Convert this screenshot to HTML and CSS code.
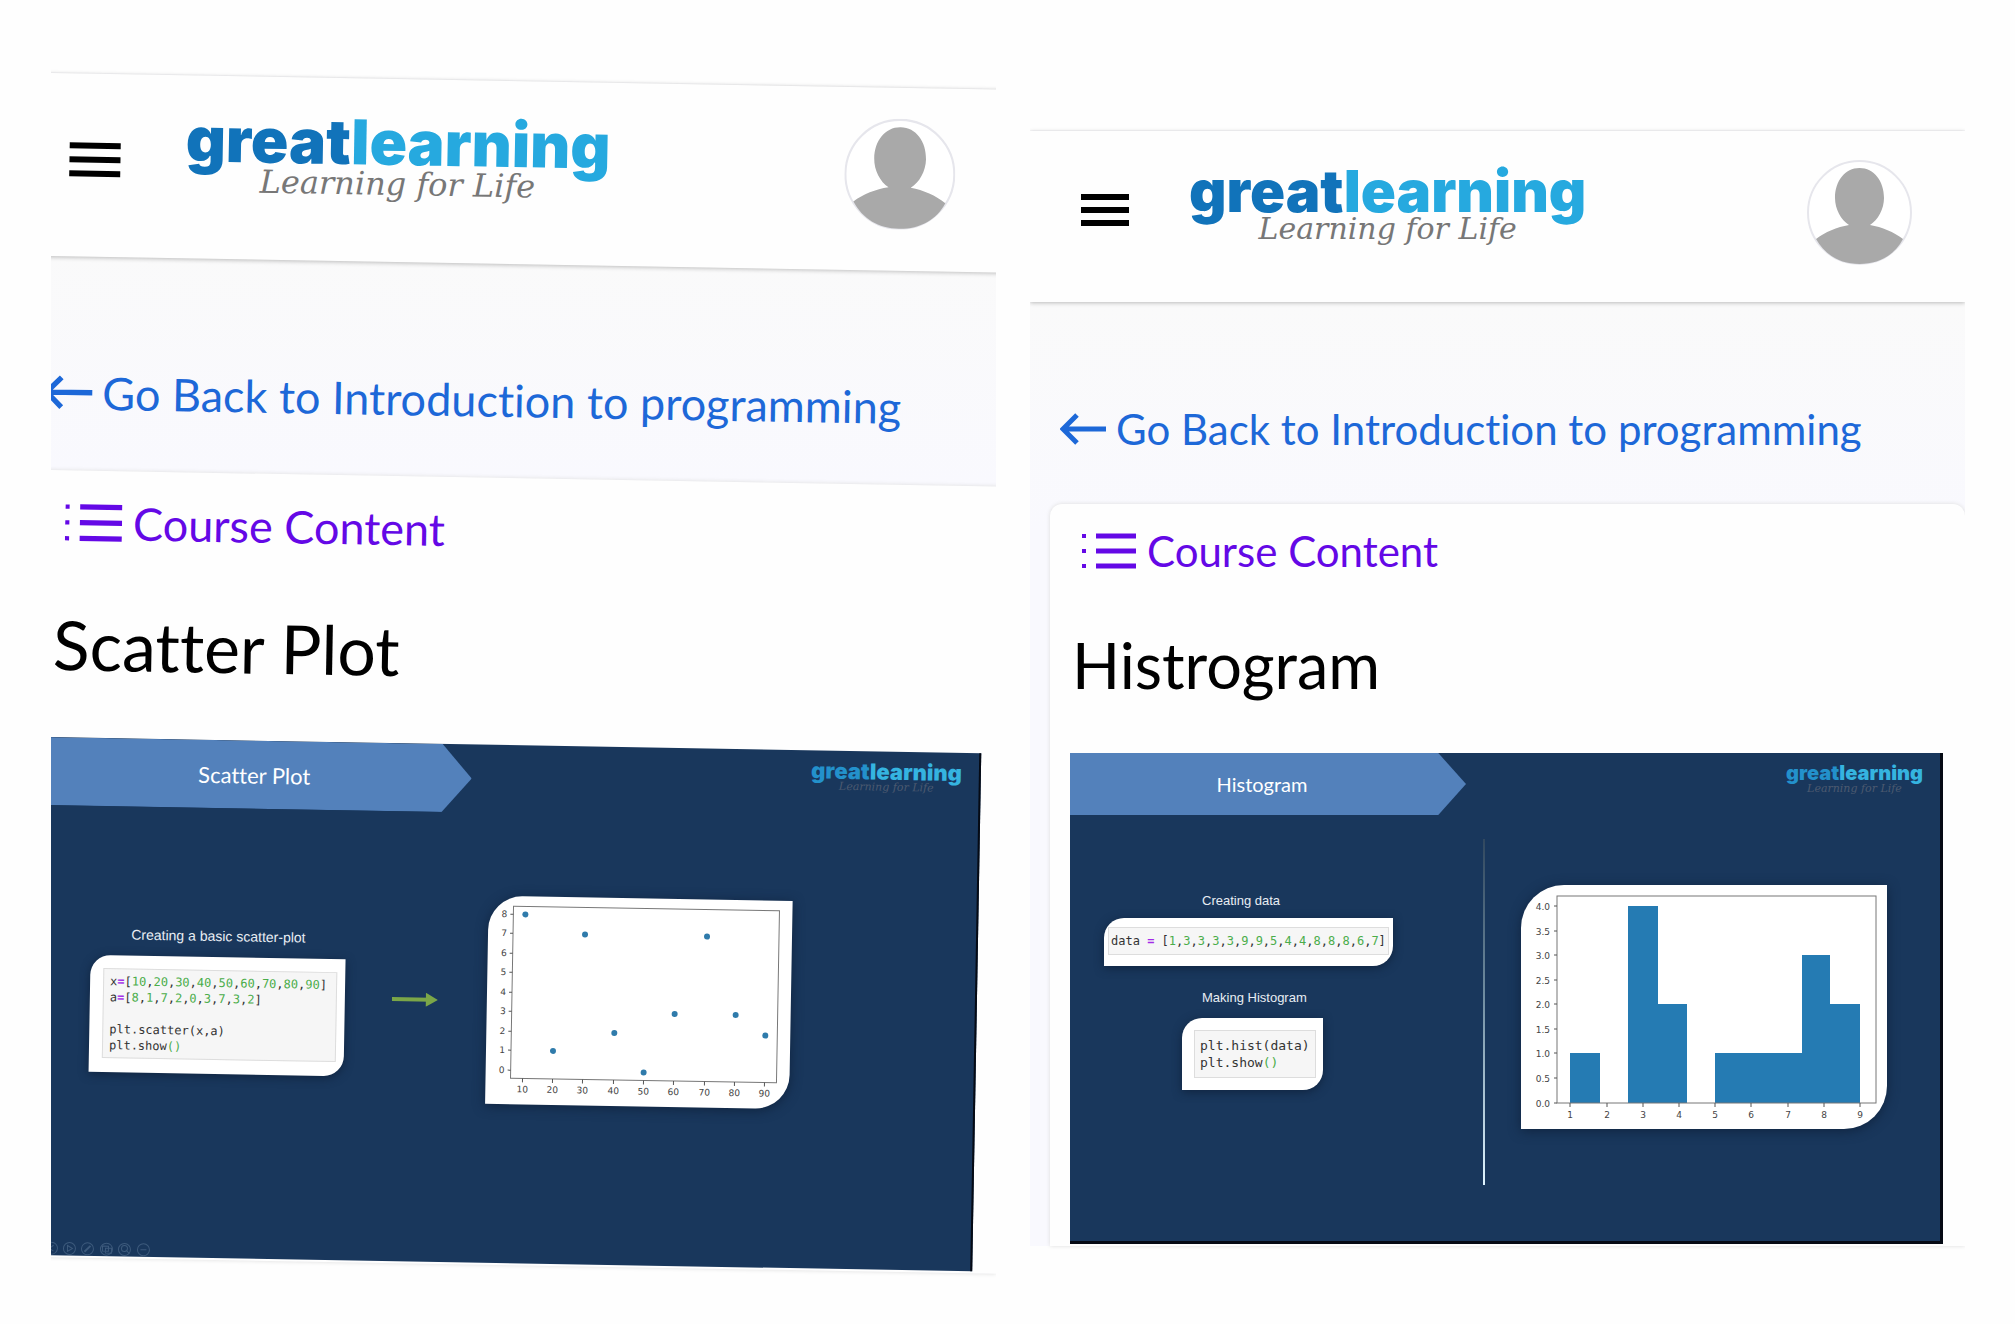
FILE: index.html
```html
<!DOCTYPE html>
<html lang="en">
<head>
<meta charset="utf-8">
<meta name="viewport" content="width=device-width, initial-scale=1">
<title>Great Learning – course lessons</title>
<link rel="stylesheet" href="styles.css">
</head>
<body>
<main class="page">
  <section class="panel panel--tilted" aria-label="Scatter Plot lesson">
    <div class="screen">
      <header class="topbar">
        <button class="menu" type="button" aria-label="Menu"><span></span><span></span><span></span></button>
        <a class="brand" href="#"><span class="brand__name"><b>great</b>learning</span><span class="brand__tag">Learning for Life</span></a>
        <button class="avatar" type="button" aria-label="Profile">
          <svg viewBox="0 0 105 105"><circle cx="52.5" cy="52.5" r="51.5" fill="#fff" stroke="#e6e6ec" stroke-width="2"/><path d="M52.500 8C67 8 77 21 77 38C77 49 71 60 63 65C75 67 87 72 96 79C88 95 72 104 52.500 104C33 104 18 95 9 79C18 72 30 67 42 65C34 60 28 49 28 38C28 21 38 8 52.500 8Z" fill="#a9a9a9"/></svg>
        </button>
      </header>
      <nav class="back"><a href="#"><svg viewBox="0 0 48 32"><path d="M46 16H4M17 2L3 16L17 30" fill="none" stroke="currentColor" stroke-width="5"/></svg>Go Back to Introduction to programming</a></nav>
      <article class="card">
        <a class="contents" href="#"><svg viewBox="0 0 54 38"><path d="M14 4H54M14 19H54M14 34H54" stroke="currentColor" stroke-width="5"/><path d="M0 4H4M0 19H4M0 34H4" stroke="currentColor" stroke-width="4"/></svg>Course Content</a>
        <h1>Scatter Plot</h1>
        <div class="slide">
          <div class="slide__head">
            <h2 class="banner">Scatter Plot</h2>
            <div class="brand brand--small"><span class="brand__name"><b>great</b>learning</span><span class="brand__tag">Learning for Life</span></div>
          </div>
          <div class="slide__body slide__body--scatter">
            <div class="steps">
              <p class="caption">Creating a basic scatter-plot</p>
              <div class="snippet snippet--scatter"><pre>x<i>=</i>[<em>10</em>,<em>20</em>,<em>30</em>,<em>40</em>,<em>50</em>,<em>60</em>,<em>70</em>,<em>80</em>,<em>90</em>]
a<i>=</i>[<em>8</em>,<em>1</em>,<em>7</em>,<em>2</em>,<em>0</em>,<em>3</em>,<em>7</em>,<em>3</em>,<em>2</em>]

plt.scatter(x,a)
plt.show<em>()</em></pre></div>
            </div>
            <svg class="arrow" viewBox="0 0 46 14"><path d="M0 7H38" stroke="#7ba648" stroke-width="4"/><path d="M34 0L46 7L34 14V7Z" fill="#7ba648"/></svg>
            <svg class="chart chart--scatter" viewBox="0 0 304 208">
              <rect x="25" y="10" width="266" height="172" fill="none" stroke="#777"/>
              <path d="M22 18H25M22 37H25M22 57H25M22 76H25M22 96H25M22 115H25M22 135H25M22 154H25M22 174H25M37 182V186M67 182V186M97 182V186M128 182V186M158 182V186M188 182V186M219 182V186M249 182V186M279 182V186" stroke="#555"/>
              <g text-anchor="end"><text x="19" y="21">8</text><text x="19" y="40">7</text><text x="19" y="60">6</text><text x="19" y="79">5</text><text x="19" y="99">4</text><text x="19" y="118">3</text><text x="19" y="138">2</text><text x="19" y="157">1</text><text x="19" y="177">0</text></g>
              <g text-anchor="middle"><text x="37" y="196">10</text><text x="67" y="196">20</text><text x="97" y="196">30</text><text x="128" y="196">40</text><text x="158" y="196">50</text><text x="188" y="196">60</text><text x="219" y="196">70</text><text x="249" y="196">80</text><text x="279" y="196">90</text></g>
              <g fill="#2f7bab"><circle cx="37" cy="18" r="3"/><circle cx="67" cy="154" r="3"/><circle cx="97" cy="37" r="3"/><circle cx="128" cy="135" r="3"/><circle cx="158" cy="174" r="3"/><circle cx="188" cy="115" r="3"/><circle cx="219" cy="37" r="3"/><circle cx="249" cy="115" r="3"/><circle cx="279" cy="135" r="3"/></g>
            </svg>
          </div>
          <svg class="tools" viewBox="0 0 110 14" fill="none" stroke="#3d5a7c"><circle cx="7" cy="7" r="6"/><path d="M9 4L5 7L9 10"/><circle cx="25" cy="7" r="6"/><path d="M23 4L28 7L23 10Z"/><circle cx="43" cy="7" r="6"/><path d="M40 10L46 4" stroke-width="2"/><circle cx="62" cy="7" r="6"/><path d="M58 4H64V9H58ZM61 6H67V11H61Z"/><circle cx="80" cy="7" r="6"/><circle cx="80" cy="6" r="3"/><path d="M82 8L85 11"/><circle cx="99" cy="7" r="6"/><path d="M96 7H102"/></svg>
        </div>
      </article>
    </div>
  </section>

  <section class="panel" aria-label="Histogram lesson">
    <div class="screen">
      <header class="topbar">
        <button class="menu" type="button" aria-label="Menu"><span></span><span></span><span></span></button>
        <a class="brand" href="#"><span class="brand__name"><b>great</b>learning</span><span class="brand__tag">Learning for Life</span></a>
        <button class="avatar" type="button" aria-label="Profile">
          <svg viewBox="0 0 105 105"><circle cx="52.5" cy="52.5" r="51.5" fill="#fff" stroke="#e6e6ec" stroke-width="2"/><path d="M52.500 8C67 8 77 21 77 38C77 49 71 60 63 65C75 67 87 72 96 79C88 95 72 104 52.500 104C33 104 18 95 9 79C18 72 30 67 42 65C34 60 28 49 28 38C28 21 38 8 52.500 8Z" fill="#a9a9a9"/></svg>
        </button>
      </header>
      <nav class="back"><a href="#"><svg viewBox="0 0 48 32"><path d="M46 16H4M17 2L3 16L17 30" fill="none" stroke="currentColor" stroke-width="5"/></svg>Go Back to Introduction to programming</a></nav>
      <article class="card">
        <a class="contents" href="#"><svg viewBox="0 0 54 38"><path d="M14 4H54M14 19H54M14 34H54" stroke="currentColor" stroke-width="5"/><path d="M0 4H4M0 19H4M0 34H4" stroke="currentColor" stroke-width="4"/></svg>Course Content</a>
        <h1>Histrogram</h1>
        <div class="slide">
          <div class="slide__head">
            <h2 class="banner">Histogram</h2>
            <div class="brand brand--small"><span class="brand__name"><b>great</b>learning</span><span class="brand__tag">Learning for Life</span></div>
          </div>
          <div class="slide__body slide__body--hist">
            <div class="steps">
              <p class="caption">Creating data</p>
              <div class="snippet snippet--data"><pre>data <i>=</i> [<em>1</em>,<em>3</em>,<em>3</em>,<em>3</em>,<em>3</em>,<em>9</em>,<em>9</em>,<em>5</em>,<em>4</em>,<em>4</em>,<em>8</em>,<em>8</em>,<em>8</em>,<em>6</em>,<em>7</em>]</pre></div>
              <p class="caption">Making Histogram</p>
              <div class="snippet snippet--hist"><pre>plt.hist(data)
plt.show<em>()</em></pre></div>
            </div>
            <svg class="chart chart--hist" viewBox="0 0 366 244">
              <path d="M49 218V168H79V218ZM107 218V21H137V119H166V218ZM194 218V168H281V70H309V119H339V218Z" fill="#257bb3"/>
              <rect x="36" y="11" width="319" height="207" fill="none" stroke="#777"/>
              <path d="M33 21H36M33 46H36M33 70H36M33 95H36M33 119H36M33 144H36M33 168H36M33 193H36M33 218H36M49 218V222M86 218V222M122 218V222M158 218V222M194 218V222M230 218V222M267 218V222M303 218V222M339 218V222" stroke="#555"/>
              <g text-anchor="end"><text x="29" y="25">4.0</text><text x="29" y="50">3.5</text><text x="29" y="74">3.0</text><text x="29" y="99">2.5</text><text x="29" y="123">2.0</text><text x="29" y="148">1.5</text><text x="29" y="172">1.0</text><text x="29" y="197">0.5</text><text x="29" y="222">0.0</text></g>
              <g text-anchor="middle"><text x="49" y="233">1</text><text x="86" y="233">2</text><text x="122" y="233">3</text><text x="158" y="233">4</text><text x="194" y="233">5</text><text x="230" y="233">6</text><text x="267" y="233">7</text><text x="303" y="233">8</text><text x="339" y="233">9</text></g>
            </svg>
          </div>
        </div>
      </article>
    </div>
  </section>
</main>
</body>
</html>
```
FILE: styles.css
```css
* { box-sizing: border-box; }

body {
  margin: 0;
  background: #fefefe;
  color: #000;
  font-family: Lato, "Liberation Sans", sans-serif;
  font-variant-ligatures: none;
}

a { color: inherit; text-decoration: none; }
button { border: 0; padding: 0; background: none; }
svg { display: block; flex: none; }
h1, h2, p, pre { margin: 0; font-weight: 400; }

.page {
  display: grid;
  grid-template-columns: 945fr 935fr;
  gap: 34px;
  min-height: 100vh;
  padding: 0 50px 0 51px;
}

/* Sizes of the upright screen */
.panel {
  --top: 130px;
  --bar: 171px;
  --bar-pad: 29px 53px 0 51px;
  --menu: 48px;
  --menu-gap: 7px;
  --menu-top: 34px;
  --brand-gap: 60px;
  --brand-top: 5px;
  --brand: 58px;
  --brand-line: 52px;
  --tag: 30px;
  --tag-line: 24px;
  --avatar: 105px;
  --band: 202px;
  --band-pad: 93px;
  --link: 42px;
  --card-pad: 28px 22px 2px 20px;
  --list-icon: 54px;
  --title: 63px;
  --title-pad: 33px 2px 26px;
  --title-line: 124px;
  --slide: 491px;
  --head: 62px;
  --banner: 396px;
  --banner-text: 20px;
  --small: 20px;
  padding-top: var(--top);
  overflow: hidden;
}

/* The tilted screen is slightly larger and runs past its frame */
.panel--tilted {
  --top: 72px;
  --bar: 183px;
  --bar-pad: 31px 60px 0 52px;
  --menu: 51px;
  --menu-gap: 8px;
  --menu-top: 38px;
  --brand-gap: 65px;
  --brand: 62px;
  --brand-line: 56px;
  --tag: 32px;
  --tag-line: 26px;
  --avatar: 111px;
  --band: 214px;
  --band-pad: 102px;
  --link: 45px;
  --card-pad: 32px 24px 2px 22px;
  --list-icon: 57px;
  --title: 68px;
  --title-pad: 36px 2px 27px;
  --title-line: 132px;
  --slide: 518px;
  --head: 68px;
  --banner: 423px;
  --banner-text: 22px;
  --small: 22px;
}

.screen {
  border-top: 1px solid #f8f8fa;
  background: linear-gradient(#fafafa 170px, #f9f9fe 400px);
}
.panel--tilted .screen {
  margin: 0 -21px 0 -32px;
  transform: rotate(1deg);
  transform-origin: 32px 0;
}

.topbar {
  display: flex;
  align-items: flex-start;
  height: var(--bar);
  padding: var(--bar-pad);
  background: #fefefe;
  box-shadow: 0 1px 4px #bbb;
}
.menu {
  display: grid;
  gap: var(--menu-gap);
  width: var(--menu);
  margin-top: var(--menu-top);
}
.menu span { height: 6px; background: #000; }

.brand {
  display: flex;
  flex-direction: column;
  align-items: center;
  margin: var(--brand-top) 0 0 var(--brand-gap);
  color: #26a9df;
}
.brand__name {
  font: 900 var(--brand)/var(--brand-line) Inter, sans-serif;
}
.brand__name b { color: #1173ba; font-weight: inherit; }
.brand__tag {
  color: #777;
  font: italic var(--tag)/var(--tag-line) "DejaVu Serif", serif;
  white-space: nowrap;
}
.avatar { width: var(--avatar); height: var(--avatar); margin-left: auto; }

.back {
  height: var(--band);
  padding: var(--band-pad) 30px 0;
  color: #1d68d8;
}
.back a {
  display: flex;
  align-items: center;
  gap: 8px;
  font-size: var(--link);
  line-height: 68px;
  white-space: nowrap;
}
.back svg { width: var(--menu); }

.card {
  margin-left: 20px;
  padding: var(--card-pad);
  border-radius: 12px 12px 0 0;
  background: #fefefe;
  box-shadow: 0 0 4px #ddd;
}
.contents {
  display: flex;
  align-items: center;
  gap: 11px;
  padding-left: 12px;
  color: #6408e6;
  font-size: var(--link);
  line-height: 38px;
}
.contents svg { width: var(--list-icon); }

h1 {
  padding: var(--title-pad);
  font-size: var(--title);
  line-height: var(--title-line);
}

.slide {
  position: relative;
  height: var(--slide);
  border: solid #050a14;
  border-width: 0 3px 3px 0;
  background: #19375c;
}
.panel--tilted .slide { border-width: 0 2px 0 0; }
.slide__head { display: flex; justify-content: space-between; }
.banner {
  display: grid;
  place-items: center;
  width: var(--banner);
  height: var(--head);
  padding-right: 12px;
  background: #5381bb;
  clip-path: polygon(0 0, 93% 0, 100% 50%, 93% 100%, 0 100%);
  color: #fff;
  font-size: var(--banner-text);
}
.brand--small {
  --brand: var(--small);
  --brand-line: 20px;
  --tag: 11px;
  --tag-line: 12px;
  margin: 10px 17px 0 0;
  color: #35b4e0;
}
.brand--small .brand__name b { color: #2391cb; }
.brand--small .brand__tag { color: #4c5a70; }

.slide__body { display: flex; align-items: flex-start; }
.slide__body--scatter { padding: 83px 0 0 45px; }
.slide__body--hist { padding: 70px 0 0 34px; }

.caption { color: #e8edf3; font: 13px/18px "Liberation Sans", sans-serif; }
.snippet {
  background: #fff;
  border-radius: 20px 0;
  box-shadow: 0 2px 10px #10243f;
}
.snippet pre {
  border: 1px solid #ddd;
  background: #f6f6f6;
  color: #333;
  font: 12px/16px "DejaVu Sans Mono", monospace;
}
.snippet i { color: #a32be8; font-style: normal; font-weight: 700; }
.snippet em { color: #4aad4a; font-style: normal; }

.slide__body--scatter .steps { width: 255px; padding-top: 36px; text-align: center; }
.slide__body--scatter .caption { font-size: 14px; }
.slide__body--scatter .snippet { margin-top: 12px; text-align: left; }
.snippet--scatter { padding: 13px 8px 14px 13px; }
.snippet--scatter pre { padding: 4px 6px; }
.arrow { width: 46px; margin: 98px 49px 0 47px; }

.slide__body--hist .steps { width: 379px; padding-top: 7px; }
.slide__body--hist .caption { padding-left: 98px; }
.slide__body--hist .caption + .snippet { margin-top: 8px; }
.snippet--data { width: 289px; height: 48px; padding: 9px 4px 11px; }
.snippet--data pre { padding: 5px 2px; }
.snippet--data + .caption { margin-top: 23px; }
.slide__body--hist .caption + .snippet--hist { margin: 11px 0 0 78px; }
.snippet--hist { width: 141px; height: 72px; padding: 12px 7px 11px 12px; }
.snippet--hist pre { padding: 6px 5px; font-size: 13px; line-height: 17px; }

/* Divider between the code and the chart */
.slide__body--hist::before {
  content: "";
  order: 1;
  width: 2px;
  height: 346px;
  margin: -46px 36px 0 0;
  background: linear-gradient(#31485f, #6f8ca0 45%, #dff4ff);
}
.slide__body--hist .chart { order: 2; }

.chart { background: #fff; box-shadow: 0 2px 12px #10243f; }
.chart text { fill: #444; font: 9px "DejaVu Sans", sans-serif; }
.chart--scatter { width: 304px; height: 208px; border-radius: 34px 0; }
.chart--hist { width: 366px; height: 244px; border-radius: 43px 0; }

.tools { position: absolute; left: 4px; bottom: 0; width: 110px; height: 14px; }
```
